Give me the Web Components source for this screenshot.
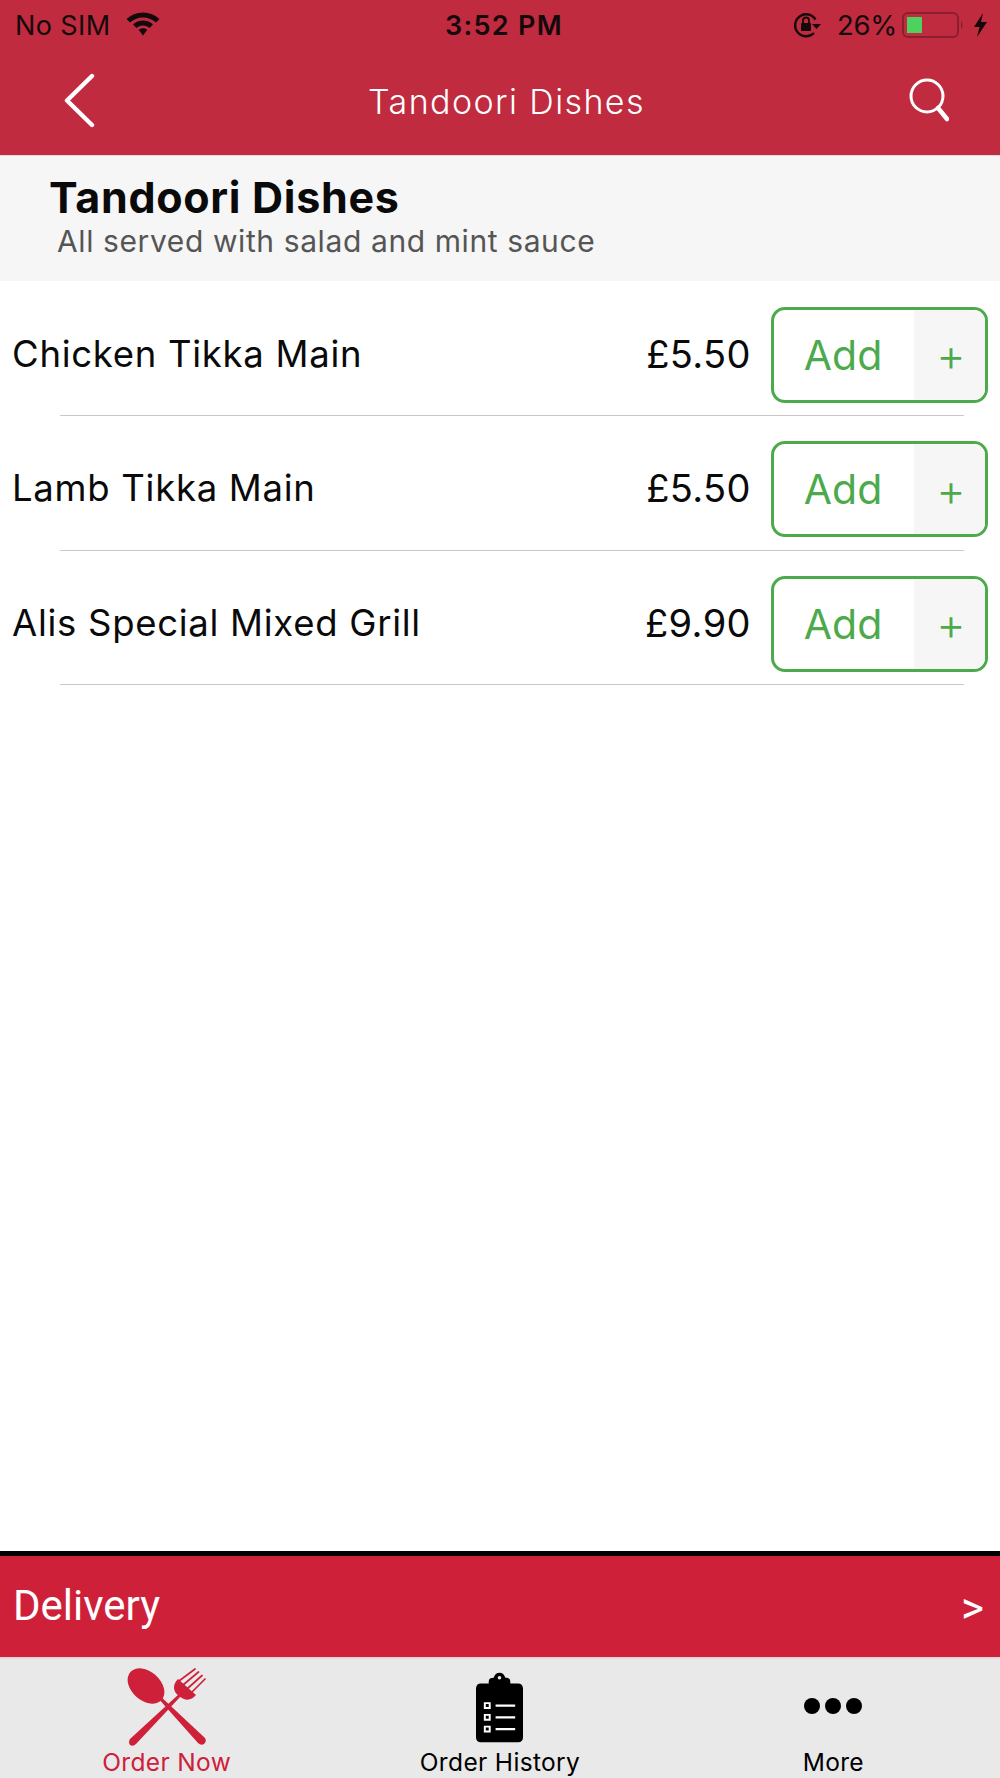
<!DOCTYPE html>
<html>
<head>
<meta charset="utf-8">
<title>Tandoori Dishes</title>
<style>
    html, body { margin: 0; padding: 0; height: 100%; background: #fff; }
    body { font-family: "Inter", "Liberation Sans", sans-serif; }
</style>
</head>
<body>
<app-shell>
    <status-bar slot="top"></status-bar>
    <nav-bar slot="top" title="Tandoori Dishes"></nav-bar>
    <section-head heading="Tandoori Dishes" note="All served with salad and mint sauce"></section-head>
    <menu-row name="Chicken Tikka Main" price="£5.50"></menu-row>
    <menu-row name="Lamb Tikka Main" price="£5.50"></menu-row>
    <menu-row name="Alis Special Mixed Grill" price="£9.90"></menu-row>
    <delivery-bar slot="bottom" label="Delivery"></delivery-bar>
    <tab-bar slot="bottom">
        <tab-item label="Order Now" icon="cutlery" active></tab-item>
        <tab-item label="Order History" icon="clipboard"></tab-item>
        <tab-item label="More" icon="dots"></tab-item>
    </tab-bar>
</app-shell>

<script>
class AppShell extends HTMLElement {
    constructor() {
        super();
        this.$shadow = this.attachShadow({ mode: 'open' });
    }

    connectedCallback() {
        this.$shadow.innerHTML = `
        <style>
            :host { display: flex; flex-direction: column; height: 100vh; overflow: hidden; }
            .top { background: #c02b40; }
            main { flex: 1; min-height: 0; }
        </style>
        <div class="top"><slot name="top"></slot></div>
        <main><slot></slot></main>
        <slot name="bottom"></slot>`;
    }
}

class StatusBar extends HTMLElement {
    constructor() {
        super();
        this.$shadow = this.attachShadow({ mode: 'open' });
    }

    connectedCallback() {
        this.$shadow.innerHTML = `
        <style>
            :host { display: flex; align-items: center; justify-content: space-between; height: 50px; padding: 0 12px 0 15px; color: #140a0c; font: 400 27px "Inter", "Liberation Sans", sans-serif; letter-spacing: .4px; }
            .side { display: flex; align-items: center; flex: 1; }
            .right { justify-content: flex-end; }
            .time { font-weight: 600; font-size: 27px; letter-spacing: 1.300px; margin-left: 5px; }
            svg { display: block; }
            .wifi { margin: -2px 0 0 15px; }
            .pct { margin: 0 5px 0 16px; font-size: 27.500px; letter-spacing: -.3px; }
            .bolt { margin-left: 9px; }
        </style>
        <div class="side">
            <span>No SIM</span>
            <svg class="wifi" width="34" height="24" viewBox="0 0 34 24"><path fill="#140a0c" d="M17 .5C10.500 .5 5 2.800 .5 7L4 10.500C7.500 7.400 11.800 5.400 17 5.400S26.500 7.400 30 10.500L33.500 7C29 2.800 23.500 .5 17 .5Z"/><path fill="#140a0c" d="M17 8.600C13 8.600 9.700 10 7 12.500L10.500 16C12.200 14.500 14.300 13.600 17 13.600S21.800 14.500 23.500 16L27 12.500C24.300 10 21 8.600 17 8.600Z"/><path fill="#140a0c" d="M17 16.200C15.200 16.200 13.800 16.800 12.600 17.800L17 23.500L21.400 17.800C20.200 16.800 18.800 16.200 17 16.200Z"/></svg>
        </div>
        <span class="time">3:52 PM</span>
        <div class="side right">
            <svg width="28" height="26" viewBox="0 0 28 26"><path fill="none" stroke="#140a0c" stroke-width="2.400" d="M22.500 7.500A11 11 0 1 0 21 21"/><path fill="#140a0c" d="M19 12H28L23.500 17Z"/><rect x="8" y="11" width="10" height="8" rx="1" fill="#140a0c"/><path fill="none" stroke="#140a0c" stroke-width="1.800" d="M10 11V8.500A3 3 0 0 1 16 8.500V11"/></svg>
            <span class="pct">26%</span>
            <svg width="62" height="28" viewBox="0 0 62 28"><rect x="1" y="2" width="55" height="24" rx="5" fill="none" stroke="#8a1f30" stroke-width="2"/><rect x="5" y="6" width="15" height="16" fill="#4fd15e"/><path d="M59 10C61 11 61 17 59 18Z" fill="#8a1f30"/></svg>
            <svg class="bolt" width="15" height="24" viewBox="0 0 15 24"><path fill="#140a0c" d="M10 0L1 14H6.500L4 24L14 9H8Z"/></svg>
        </div>`;
    }
}

class NavBar extends HTMLElement {
    constructor() {
        super();
        this.$shadow = this.attachShadow({ mode: 'open' });
    }

    connectedCallback() {
        this.$shadow.innerHTML = `
        <style>
            :host { display: flex; align-items: center; justify-content: space-between; height: 106px; padding: 0 51px 3px 64px; box-sizing: border-box; color: #fff; border-bottom: 1px solid #e9d6d9; }
            .title { font: 300 34px "Inter", "Liberation Sans", sans-serif; letter-spacing: 1.400px; margin-left: 8px; }
            svg { display: block; }
        </style>
        <svg width="32" height="56" viewBox="0 0 32 56"><path d="M28 3L3 27.500L28 52" fill="none" stroke="#fff" stroke-width="4.400" stroke-linecap="round" stroke-linejoin="round"/></svg>
        <span class="title">${this.getAttribute('title')}</span>
        <svg width="40" height="46" viewBox="0 0 40 46" style="margin-top:-1px"><circle cx="18" cy="18" r="16" fill="none" stroke="#fff" stroke-width="3"/><path d="M29 30L38 41" stroke="#fff" stroke-width="4.500" stroke-linecap="round"/></svg>`;
    }
}

class SectionHead extends HTMLElement {
    constructor() {
        super();
        this.$shadow = this.attachShadow({ mode: 'open' });
    }

    connectedCallback() {
        this.$shadow.innerHTML = `
        <style>
            :host { display: block; height: 125px; box-sizing: border-box; padding: 18px 0 0 49px; background: #f6f6f6; font-family: "Inter", "Liberation Sans", sans-serif; }
            h1 { margin: 0; font-size: 43px; line-height: 46px; font-weight: 700; letter-spacing: .7px; color: #0a0a0a; }
            p { margin: 3px 0 0 8px; font-size: 30px; line-height: 36px; font-weight: 400; letter-spacing: .6px; color: #555; }
        </style>
        <h1>${this.getAttribute('heading')}</h1>
        <p>${this.getAttribute('note')}</p>`;
    }
}

class AddButton extends HTMLElement {
    constructor() {
        super();
        this.$shadow = this.attachShadow({ mode: 'open' });
    }

    connectedCallback() {
        this.$shadow.innerHTML = `
        <style>
            :host { display: flex; width: 217px; height: 96px; box-sizing: border-box; border: 3px solid #4caa4c; border-radius: 14px; overflow: hidden; color: #4caa4c; background: #fff; font-family: "Inter", "Liberation Sans", sans-serif; }
            .label { flex: 1; display: flex; align-items: center; justify-content: center; font-size: 41px; font-weight: 400; padding-right: 2px; }
            .plus { width: 71px; display: flex; align-items: center; justify-content: center; background: #f6f6f6; font-size: 45px; font-weight: 300; padding: 0 0 0 3px; box-sizing: border-box; }
        </style>
        <span class="label">Add</span>
        <span class="plus">+</span>`;
    }
}

class MenuRow extends HTMLElement {
    constructor() {
        super();
        this.$shadow = this.attachShadow({ mode: 'open' });
    }

    connectedCallback() {
        this.$shadow.innerHTML = `
        <style>
            :host { display: block; height: 134.500px; box-sizing: border-box; padding-top: 26px; }
            .line { display: flex; align-items: center; height: 95px; padding: 0 12px; color: #0a0a0a; font: 400 36.500px "Inter", "Liberation Sans", sans-serif; }
            .name { flex: 1; letter-spacing: .72px; padding-bottom: 2px; }
            .price { margin-right: 20px; font-size: 38px; letter-spacing: .4px; padding-bottom: 2px; }
            hr { margin: 13px 36px 0 60px; border: 0; height: 1px; background: #c8c8c8; }
        </style>
        <div class="line">
            <span class="name">${this.getAttribute('name')}</span>
            <span class="price">${this.getAttribute('price')}</span>
            <add-button></add-button>
        </div>
        <hr>`;
    }
}

class DeliveryBar extends HTMLElement {
    constructor() {
        super();
        this.$shadow = this.attachShadow({ mode: 'open' });
    }

    connectedCallback() {
        this.$shadow.innerHTML = `
        <style>
            :host { display: flex; align-items: center; justify-content: space-between; height: 106px; box-sizing: border-box; padding: 0 16px 3px 13px; background: #cf203a; border-top: 5px solid #000; color: #fff; font: 400 42px "Roboto", "Liberation Sans", sans-serif; }
            .go { font-size: 44px; padding-top: 6px; }
        </style>
        <span>${this.getAttribute('label')}</span>
        <span class="go">&gt;</span>`;
    }
}

class TabBar extends HTMLElement {
    constructor() {
        super();
        this.$shadow = this.attachShadow({ mode: 'open' });
    }

    connectedCallback() {
        this.$shadow.innerHTML = `
        <style>
            :host { display: grid; grid-template-columns: repeat(3, 1fr); height: 121px; box-sizing: border-box; background: #e9e9e9; border-top: 2px solid #e4d8da; }
        </style>
        <slot></slot>`;
    }
}

const TAB_ICONS = {
    cutlery: `<svg width="82" height="80" viewBox="0 0 82 80">
        <ellipse cx="20" cy="18" rx="21" ry="14.500" transform="rotate(42 20 18)" fill="#cf203a"/>
        <path fill="#cf203a" d="M31 29L33 27L79 70Q81 73 78 76Q75 78 72 75Z"/>
        <path fill="#cf203a" d="M53 26L55 28L10 76Q7 79 4 77Q2 74 4 71Z"/>
        <path fill="#cf203a" d="M53 28C46 23 47 16 52 11L70 27C65 33 59 33 53 28Z"/>
        <path fill="none" stroke="#cf203a" stroke-width="1.700" stroke-linecap="round" d="M53 13L69 1M57 17L72.500 4M61 21L76 7.500M65 25L79 11"/>
    </svg>`,
    clipboard: `<svg width="47" height="72" viewBox="0 0 48 72">
        <path fill="#000" d="M5 11H13V9C13 6 15 5 18 5C19 2 21 0 24 0S29 2 30 5C33 5 35 6 35 9V11H43C46 11 48 13 48 16V66C48 69 46 71 43 71H5C2 71 0 69 0 66V16C0 13 2 11 5 11Z"/>
        <circle cx="24" cy="5" r="1.800" fill="#e9e9e9"/>
        <path fill="none" stroke="#fff" stroke-width="2" d="M9 31h5v5h-5zM9 43h5v5h-5zM9 55h5v5h-5z"/>
        <path stroke="#fff" stroke-width="2.400" d="M20 33.500H40M20 45.500H40M20 57.500H40"/>
    </svg>`,
    dots: `<svg width="58" height="18" viewBox="0 0 58 18" style="margin-top:-3px">
        <circle cx="8" cy="9" r="8" fill="#000"/><circle cx="29" cy="9" r="8" fill="#000"/><circle cx="50" cy="9" r="8" fill="#000"/>
    </svg>`
};

class TabItem extends HTMLElement {
    constructor() {
        super();
        this.$shadow = this.attachShadow({ mode: 'open' });
    }

    connectedCallback() {
        const color = this.hasAttribute('active') ? '#cf203a' : '#000';
        this.$shadow.innerHTML = `
        <style>
            :host { display: flex; flex-direction: column; align-items: center; color: ${color}; font: 400 24.500px "Inter", "Liberation Sans", sans-serif; letter-spacing: .35px; }
            .icon { height: 88px; display: flex; align-items: center; justify-content: center; padding-top: 9px; box-sizing: border-box; }
            svg { display: block; }
            .text { line-height: 30px; }
        </style>
        <div class="icon">${TAB_ICONS[this.getAttribute('icon')]}</div>
        <span class="text">${this.getAttribute('label')}</span>`;
    }
}

window.customElements.define('app-shell', AppShell);
window.customElements.define('status-bar', StatusBar);
window.customElements.define('nav-bar', NavBar);
window.customElements.define('section-head', SectionHead);
window.customElements.define('add-button', AddButton);
window.customElements.define('menu-row', MenuRow);
window.customElements.define('delivery-bar', DeliveryBar);
window.customElements.define('tab-bar', TabBar);
window.customElements.define('tab-item', TabItem);
</script>
</body>
</html>
